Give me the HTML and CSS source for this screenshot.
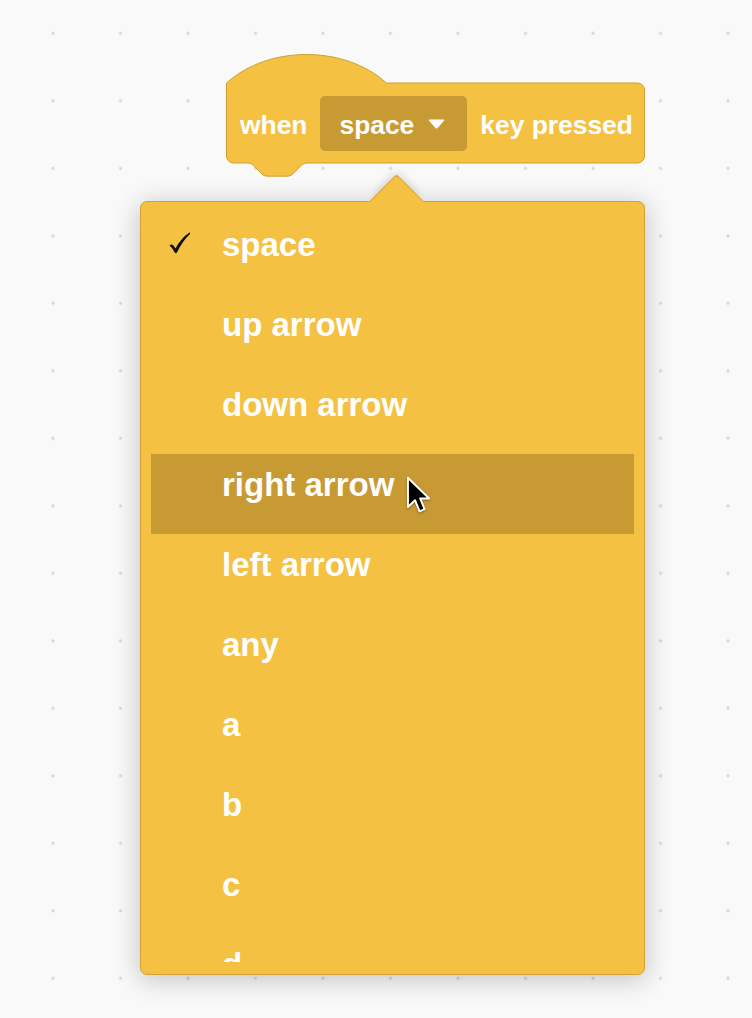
FILE: index.html
```html
<!DOCTYPE html>
<html lang="en">
<head>
    <meta charset="UTF-8">
    <meta name="viewport" content="width=device-width, initial-scale=1.0">
    <title>when key pressed</title>
    <link rel="stylesheet" href="styles.css">
</head>
<body>
    <div class="block">
        <svg class="block-shape" width="421" height="126" viewBox="0 0 421 126">
            <path d="M 0.5,29 c 42,-38 118,-38 160,0 H 411.5 a 7 7 0 0 1 7 7 V 102 a 7 7 0 0 1 -7 7 H 81 c -3.3,0 -5,1.65 -6.6,3.3 l -6.6,6.6 c -1.65,1.65 -3.3,3.3 -6.6,3.3 h -19.8 c -3.3,0 -5,-1.65 -6.6,-3.3 l -6.6,-6.6 c -1.65,-1.65 -3.3,-3.3 -6.6,-3.3 H 7.5 a 7 7 0 0 1 -7 -7 Z" />
        </svg>
        <div class="block-row">
            <span class="label">when</span>
            <span class="field">
                space
                <svg class="caret" width="17" height="10" viewBox="0 0 17 10">
                    <path d="M1.5,0.5 H15.5 Q17,0.5 16,1.8 L9.6,8.9 Q8.5,10 7.4,8.9 L1,1.8 Q0,0.5 1.5,0.5 Z" />
                </svg>
            </span>
            <span class="label">key pressed</span>
        </div>
    </div>

    <div class="menu">
        <div class="menu-list">
            <div class="item">
                <span class="check">
                    <svg width="22" height="22" viewBox="0 0 22 22">
                        <path d="M0.5,13.5 Q2.5,11.5 4.5,13.5 L6.5,16.5 Q12,6 20.5,0.5 Q21.8,0.8 21,1.9 Q13,9.5 7.9,20.5 Q7,21.9 5.8,20.8 Q3.5,16 0.5,13.5 Z" />
                    </svg>
                </span>
                <span class="text">space</span>
            </div>
            <div class="item"><span class="check"></span><span class="text">up arrow</span></div>
            <div class="item"><span class="check"></span><span class="text">down arrow</span></div>
            <div class="item active">
                <span class="check"></span><span class="text">right arrow</span>
                <svg class="cursor" width="26" height="38" viewBox="-1 -1 14.5 21.5">
                    <path d="M0,0 L0,16.5 L4,12.7 L6.6,19 L9.4,17.8 L6.9,11.7 L12,11.7 Z" />
                </svg>
            </div>
            <div class="item"><span class="check"></span><span class="text">left arrow</span></div>
            <div class="item"><span class="check"></span><span class="text">any</span></div>
            <div class="item"><span class="check"></span><span class="text">a</span></div>
            <div class="item"><span class="check"></span><span class="text">b</span></div>
            <div class="item"><span class="check"></span><span class="text">c</span></div>
            <div class="item"><span class="check"></span><span class="text">d</span></div>
        </div>
    </div>
</body>
</html>
```

FILE: styles.css
```css
html, body {
    margin: 0;
    padding: 0;
}

body {
    min-height: 1018px;
    font-family: "Liberation Sans", Arial, sans-serif;
    font-weight: bold;
    color: #fff;
    background-color: #f9f9f9;
    background-image: radial-gradient(circle, #d6d6d6 1.2px, rgba(214, 214, 214, 0) 1.9px);
    background-size: 67.5px 67.5px;
    background-position: 19.25px -0.45px;
    overflow: hidden;
}

/* hat block */
.block {
    position: relative;
    width: 419px;
    height: 80px;
    margin: 83px 0 0 226px;
}

.block-shape {
    position: absolute;
    left: 0;
    top: -29px;
    overflow: visible;
}

.block-shape path {
    fill: #f5c143;
    stroke: #cf9f31;
    stroke-width: 1;
}

.block-row {
    position: relative;
    display: flex;
    align-items: center;
    gap: 13px;
    height: 80px;
    padding: 0 0 0 14px;
    box-sizing: border-box;
    font-size: 26.4px;
}

.label {
    padding-top: 5px;
}

.field {
    display: flex;
    align-items: center;
    gap: 14px;
    height: 55px;
    padding: 5px 22px 0 19px;
    box-sizing: border-box;
    border-radius: 5px;
    background: #c89a34;
}

.caret {
    margin-top: -3px;
}

.caret path {
    fill: #fff;
}

/* dropdown menu */
.menu {
    position: relative;
    width: 505px;
    height: 774px;
    margin: 38px 0 0 140px;
    padding: 12px 10px;
    box-sizing: border-box;
    background: #f5c143;
    border: 1px solid #d2a233;
    border-radius: 7px;
    box-shadow: 0 4px 26px 2px rgba(0, 0, 0, 0.2);
}

.menu::before {
    content: "";
    position: absolute;
    left: 236px;
    top: -20px;
    width: 38px;
    height: 38px;
    background: #f5c143;
    border-top: 1px solid #d2a233;
    border-left: 1px solid #d2a233;
    border-top-left-radius: 4px;
    transform: rotate(45deg);
    box-shadow: -5px -5px 10px -4px rgba(0, 0, 0, 0.18);
}

.menu-list {
    position: relative;
    height: 100%;
    overflow: hidden;
}

.item {
    position: relative;
    display: flex;
    align-items: flex-start;
    height: 80px;
    padding: 13px 0 0 18px;
    box-sizing: border-box;
    font-size: 33px;
    line-height: 36px;
}

.item.active {
    background: #c89a34;
}

.check {
    width: 22px;
    height: 22px;
    margin: 5px 31px 0 0;
}

.check svg {
    display: block;
}

.check path {
    fill: #111;
}

.cursor {
    position: absolute;
    left: 255px;
    top: 22px;
    filter: drop-shadow(0 1px 1px rgba(0, 0, 0, 0.35));
}

.cursor path {
    fill: #000;
    stroke: #fff;
    stroke-width: 1.1;
    stroke-linejoin: round;
}
```
